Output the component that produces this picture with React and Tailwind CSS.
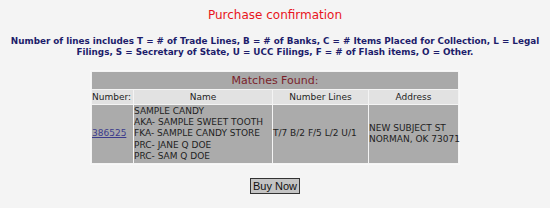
export default function App() {
  return (
    <div className="w-[550px] h-[208px] bg-[#f4f4f4] flex flex-col items-center" style={{ fontFamily: '"DejaVu Sans", Verdana, sans-serif' }}>
      <h1 className="mt-[7px] text-[12px] leading-[16px] text-[#e8141c]">Purchase confirmation</h1>
      <p className="mt-[13px] text-[8.8px] leading-[11px] font-bold text-[#1d1d6b] text-center whitespace-nowrap">
        Number of lines includes T = # of Trade Lines, B = # of Banks, C = # Items Placed for Collection, L = Legal
        <br />
        Filings, S = Secretary of State, U = UCC Filings, F = # of Flash items, O = Other.
      </p>
      <table className="mt-[12px] w-[370px] table-fixed border border-[#f8f8f8] border-separate border-spacing-[1px] text-[9px] text-[#222]">
        <colgroup>
          <col className="w-[41px]" />
          <col className="w-[138px]" />
          <col className="w-[95px]" />
          <col />
        </colgroup>
        <tbody>
          <tr>
            <td colSpan={4} className="bg-[#a9a9a9] text-center text-[11px] h-[17px] leading-[16px] text-[#7a1f2a]">Matches Found:</td>
          </tr>
          <tr className="bg-[#e2e2e2] text-center h-[14px] leading-[13px]">
            <td className="text-left">Number:</td>
            <td>Name</td>
            <td>Number Lines</td>
            <td>Address</td>
          </tr>
          <tr className="bg-[#ababab] leading-[11.2px]">
            <td className="align-middle"><a className="text-[#3b3b8c] underline">386525</a></td>
            <td className="py-[1px] whitespace-nowrap">
              SAMPLE CANDY<br />AKA- SAMPLE SWEET TOOTH<br />FKA- SAMPLE CANDY STORE<br />PRC- JANE Q DOE<br />PRC- SAM Q DOE
            </td>
            <td className="whitespace-nowrap">T/7 B/2 F/5 L/2 U/1</td>
            <td className="whitespace-nowrap">NEW SUBJECT ST<br />NORMAN, OK 73071</td>
          </tr>
        </tbody>
      </table>
      <button className="mt-[13px] w-[50px] h-[16px] bg-[#c4c4c4] border border-[#333] text-[11px] leading-[14px] text-[#111]" style={{ fontFamily: '"Liberation Sans", Arial, sans-serif' }}>Buy Now</button>
    </div>
  );
}
